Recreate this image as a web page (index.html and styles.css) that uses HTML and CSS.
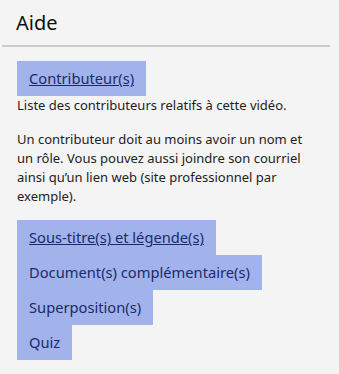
FILE: index.html
```html
<!DOCTYPE html>
<html lang="fr">
<head>
<meta charset="utf-8">
<link rel="stylesheet" href="styles.css">
</head>
<body>
<div class="panel">
  <h2 class="title">Aide</h2>
  <div class="content">
    <div class="section">
      <a class="tab tab-link" href="#">Contributeur(s)</a>
      <p class="text">Liste des contributeurs relatifs à cette vidéo.</p>
      <p class="text">Un contributeur doit au moins avoir un nom et un rôle. Vous pouvez aussi joindre son courriel ainsi qu’un lien web (site professionnel par exemple).</p>
    </div>
    <div class="tabs">
      <a class="tab tab-link" href="#">Sous-titre(s) et légende(s)</a>
      <span class="tab">Document(s) complémentaire(s)</span>
      <span class="tab">Superposition(s)</span>
      <span class="tab">Quiz</span>
    </div>
  </div>
</div>
</body>
</html>
```
FILE: styles.css
```css
html, body {
  margin: 0;
  padding: 0;
  background: #f4f4f4;
}
body {
  font-family: "Noto Sans", "Open Sans", sans-serif;
  color: #222;
}
.panel {
  width: 328px;
  margin-left: 2px;
}
.title {
  margin: 0;
  padding: 9px 0 9px 14px;
  font-size: 20px;
  font-weight: 400;
  line-height: 27px;
  color: #111;
  border-bottom: 2px solid #cbcbcb;
}
.content {
  padding: 14px 20px 0 15px;
}
.section {
  display: flex;
  flex-direction: column;
  align-items: flex-start;
}
.tab {
  display: inline-block;
  background: #a2b3ec;
  color: #1b2a6b;
  font-size: 14.7px;
  line-height: 19px;
  padding: 8px 12px;
  text-decoration: none;
}
.tab-link {
  text-decoration: underline;
}
.text {
  margin: 0;
  font-size: 13px;
  line-height: 19px;
  color: #222;
}
.text + .text {
  margin-top: 15px;
}
.tabs {
  display: flex;
  flex-direction: column;
  align-items: flex-start;
  margin-top: 14px;
}
```
